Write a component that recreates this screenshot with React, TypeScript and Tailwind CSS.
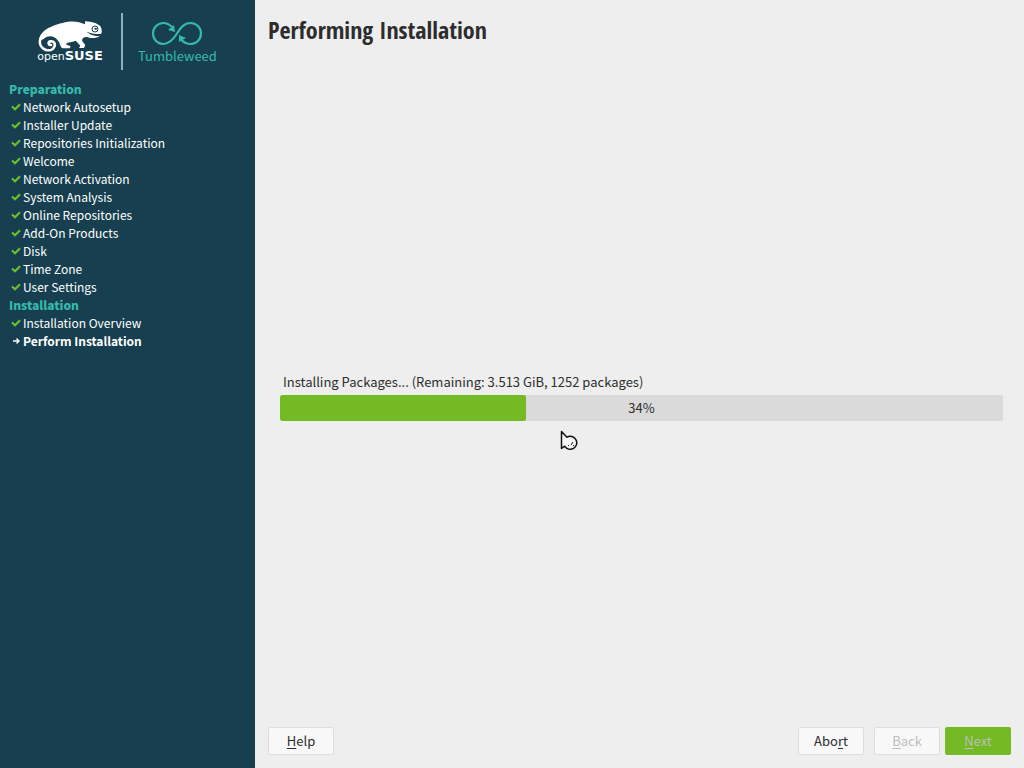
const sections = [
  {
    title: "Preparation",
    steps: [
      "Network Autosetup",
      "Installer Update",
      "Repositories Initialization",
      "Welcome",
      "Network Activation",
      "System Analysis",
      "Online Repositories",
      "Add-On Products",
      "Disk",
      "Time Zone",
      "User Settings",
    ],
  },
  { title: "Installation", steps: ["Installation Overview", "Perform Installation"] },
];

const currentStep = "Perform Installation";
const progress = 34;

function Chameleon() {
  return (
    <svg width="66" height="32" viewBox="24 37 198 96" className="shrink-0" fill="none">
      <path
        d="M30 100C30 76 62 54 100 46C130 38 150 42 168 50L168 41C188 42 208 48 214 56C219 64 219 72 217 78C208 80 192 80 172 72C188 84 200 86 213 84C204 93 184 92 174 88C162 88 158 94 160 101L169 112L165 121H150L154 114L140 99C128 105 118 101 110 110L125 116L122 122H100C92 116 94 106 86 98C76 84 56 82 44 94z"
        fill="currentColor"
      />
      <path
        d="M66 112C58 113 56 103 64 101C74 99 80 108 76 117C72 127 60 130 49 126C36 121 30 108 34 94C38 80 50 70 62 64"
        stroke="currentColor"
        strokeWidth="8"
        strokeLinecap="round"
      />
      <circle cx="198" cy="64" r="9" stroke="#173f4f" strokeWidth="3" />
      <ellipse cx="200" cy="63" rx="4" ry="3" fill="#173f4f" />
    </svg>
  );
}

function Logo() {
  return (
    <div className="flex h-[57px] items-stretch pl-[27px]">
      {/* openSUSE */}
      <div className="flex w-[68px] flex-col items-center pt-[7px] text-white">
        <Chameleon />
        <div className="-mt-1 flex items-baseline font-['DejaVu_Sans',sans-serif] leading-4">
          <span className="text-[11px]">open</span>
          <span className="text-[13px] font-bold">SUSE</span>
        </div>
      </div>
      <div className="ml-[17px] w-[2px] bg-[#8fb0bb]" />
      {/* Tumbleweed */}
      <div className="ml-[15px] flex flex-col items-center pt-2 text-[#35b9ab]">
        <svg width="52" height="26" viewBox="0 0 52 26" fill="none" stroke="currentColor" strokeWidth="2.2">
          <path d="M21 6C19 4 16 2 12.500 2a10.500 10.500 0 1 0 0 21c6 0 10-5 13.500-10.500S33 2 39.500 2a10.500 10.500 0 1 1 0 21c-4 0-7-2-9-4" />
          <path d="M23 4l1 7-7-2zM28 21v-7l7 3z" fill="currentColor" stroke="none" />
        </svg>
        <span className="text-[13px] leading-[18px]">Tumbleweed</span>
      </div>
    </div>
  );
}

function Check() {
  return (
    <svg width="10" height="8" viewBox="0 0 10 8" fill="none" stroke="#6cbf2c" strokeWidth="2.2">
      <path d="M1 3.500l3 2.800L9 1.300" />
    </svg>
  );
}

function Arrow() {
  return (
    <svg width="9" height="8" viewBox="0 0 9 8" fill="none" stroke="currentColor" strokeWidth="1.4">
      <path d="M1 4h6M4.500 1.500L7 4 4.500 6.500" />
    </svg>
  );
}

export default function App() {
  return (
    <div className="flex min-h-screen bg-[#eeeeee] font-['Noto_Sans_CJK_SC',sans-serif] text-[13px] leading-[18px] text-[#2d2d2d]">
      <aside className="w-[255px] shrink-0 bg-[#173f4f] px-[9px] pt-[13px]">
        <Logo />
        <nav className="mt-[10px] text-xs leading-[18px]">
          {sections.map(({ title, steps }) => (
            <section key={title}>
              <h2 className="font-black text-[#35b9ab]">{title}</h2>
              <ul>
                {steps.map((step) => (
                  <li key={step} className="flex items-center text-white">
                    <span className="flex w-[14px] shrink-0 justify-center">
                      {step === currentStep ? <Arrow /> : <Check />}
                    </span>
                    <span className={step === currentStep ? "font-bold" : ""}>{step}</span>
                  </li>
                ))}
              </ul>
            </section>
          ))}
        </nav>
      </aside>

      <main className="flex flex-1 flex-col px-[13px] pt-[14px] pb-[13px]">
        <h1 className="font-['Open_Sans_Condensed','Liberation_Sans_Narrow','Open_Sans',sans-serif] text-2xl leading-8 font-bold">
          Performing Installation
        </h1>

        <div className="flex flex-1 flex-col justify-center pt-5 pr-2 pl-3">
          <span id="progress-label" className="px-[3px] pb-1">
            Installing Packages... (Remaining: 3.513 GiB, 1252 packages)
          </span>
          <div
            role="progressbar"
            aria-labelledby="progress-label"
            aria-valuenow={progress}
            className="relative h-[26px] overflow-hidden rounded-xs bg-[#dadada]"
          >
            <div className="h-full rounded-xs bg-[#73ba25]" style={{ width: `${progress}%` }} />
            <span className="absolute inset-0 text-center leading-[26px]">{progress}%</span>
          </div>
        </div>

        <div className="flex">
          <button className="h-7 w-[66px] rounded-xs border border-[#dedede] bg-[#f8f8f8]">
            <u className="underline-offset-2">H</u>elp
          </button>
          <button className="ml-auto h-7 w-[66px] rounded-xs border border-[#dedede] bg-[#f8f8f8]">
            Abo<u className="underline-offset-2">r</u>t
          </button>
          <button disabled className="ml-[10px] h-7 w-[66px] rounded-xs border border-[#dedede] bg-[#f8f8f8] text-[#bdbdbd]">
            <u className="underline-offset-2">B</u>ack
          </button>
          <button disabled className="ml-[5px] h-7 w-[66px] rounded-xs bg-[#73ba25] text-[#bdbdbd]">
            <u className="underline-offset-2">N</u>ext
          </button>
        </div>
      </main>

      {/* Busy pointer */}
      <svg className="absolute top-[430px] left-[560px]" width="18" height="22" viewBox="0 0 18 22" fill="#f6f6f6" stroke="#111" strokeWidth="1.5">
        <path d="M1.500 1.500v17l3.200-2.300a6.500 6.500 0 1 0 2.300-9z" strokeLinejoin="round" />
        <path d="M8 15.500h1M11 15l2-3M13 15.500h1" strokeWidth="1" />
      </svg>
    </div>
  );
}
